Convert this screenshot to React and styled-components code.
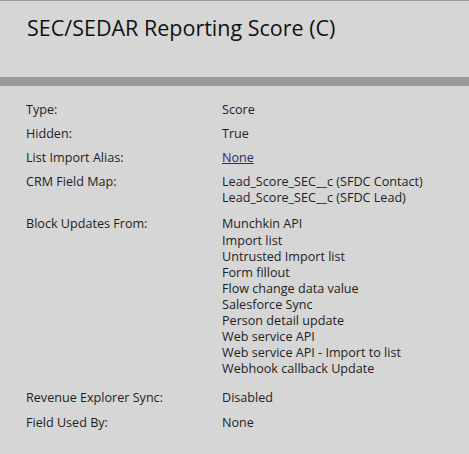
import React from 'react'
import styled, { createGlobalStyle } from 'styled-components'

const GlobalStyle = createGlobalStyle`
  html, body {
    margin: 0;
    padding: 0;
    background: #d6d6d6;
  }
  body {
    font-family: 'Open Sans', 'Liberation Sans', sans-serif;
    color: #1e1e1e;
  }
`

const Panel = styled.div`
  width: 469px;
  min-height: 454px;
  box-sizing: border-box;
  border-top: 1px solid #9c9c9c;
  background: #d6d6d6;
`

const Header = styled.div`
  height: 76px;
  box-sizing: border-box;
  padding: 12px 0 0 27px;
`

const Title = styled.h1`
  margin: 0;
  font-size: 21.5px;
  font-weight: 400;
  line-height: 30px;
  color: #111;
`

const Divider = styled.div`
  height: 9px;
  background: #9a999d;
`

const Details = styled.div`
  display: grid;
  grid-template-columns: 196px 1fr;
  padding: 12px 0 0 26px;
  font-size: 12.6px;
  line-height: 16.1px;
`

const Label = styled.div`
  padding: ${({ $extra = 0 }) => 4 + $extra}px 0 4px;
`

const Value = styled.div`
  padding: ${({ $extra = 0 }) => 4 + $extra}px 0 4px;
  display: flex;
  flex-direction: column;
`

const Link = styled.a`
  color: #2c2c6e;
  text-decoration: underline;
  align-self: flex-start;
`

const rows = [
  { label: 'Type:', values: ['Score'] },
  { label: 'Hidden:', values: ['True'] },
  { label: 'List Import Alias:', values: ['None'], link: true },
  {
    label: 'CRM Field Map:',
    values: ['Lead_Score_SEC__c (SFDC Contact)', 'Lead_Score_SEC__c (SFDC Lead)'],
  },
  {
    label: 'Block Updates From:',
    extra: 2,
    values: [
      'Munchkin API',
      'Import list',
      'Untrusted Import list',
      'Form fillout',
      'Flow change data value',
      'Salesforce Sync',
      'Person detail update',
      'Web service API',
      'Web service API - Import to list',
      'Webhook callback Update',
    ],
  },
  { label: 'Revenue Explorer Sync:', values: ['Disabled'], extra: 5 },
  { label: 'Field Used By:', values: ['None'] },
]

export default function App() {
  return (
    <Panel>
      <GlobalStyle />
      <Header>
        <Title>SEC/SEDAR Reporting Score (C)</Title>
      </Header>
      <Divider />
      <Details>
        {rows.map((row) => (
          <React.Fragment key={row.label}>
            <Label $extra={row.extra}>{row.label}</Label>
            <Value $extra={row.extra}>
              {row.values.map((v) =>
                row.link ? (
                  <Link key={v} href="#">
                    {v}
                  </Link>
                ) : (
                  <span key={v}>{v}</span>
                )
              )}
            </Value>
          </React.Fragment>
        ))}
      </Details>
    </Panel>
  )
}
